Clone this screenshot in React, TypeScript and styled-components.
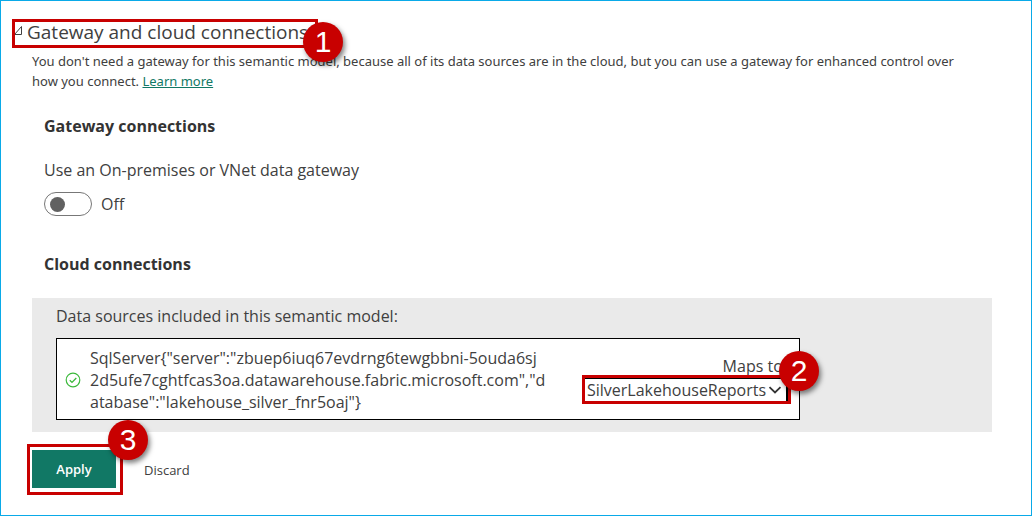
import React from "react";
import styled, { createGlobalStyle } from "styled-components";

const GlobalStyle = createGlobalStyle`
  *, *::before, *::after { box-sizing: border-box; }
  body {
    margin: 0;
    background: #fff;
    color: #404040;
    font-family: "Open Sans", "Noto Sans", sans-serif;
    font-size: 16px;
    line-height: 22px;
  }
`;

const Page = styled.main`
  min-height: 100vh;
  border: 1px solid #0aaae8;
  padding: 18px 39px 20px 31px;
`;

const Highlight = styled.div<{ $pad?: string }>`
  position: relative;
  display: flex;
  align-items: center;
  width: max-content;
  border: 3px solid #c80000;
  padding: ${(p) => p.$pad ?? "0"};
`;

const Badge = styled.span<{ $top: number; $right: number }>`
  position: absolute;
  top: ${(p) => p.$top}px;
  right: ${(p) => p.$right}px;
  z-index: 1;
  display: flex;
  align-items: center;
  justify-content: center;
  width: 40px;
  height: 40px;
  border-radius: 50%;
  background: #c80000;
  box-shadow: 2px 3px 5px rgba(0, 0, 0, 0.5);
  color: #fff;
  font: 30px/40px "Liberation Sans", Arial, sans-serif;
`;

const SectionHeader = styled.header`
  margin-left: -20px;
`;

const HeadingMark = styled(Highlight)`
  align-items: flex-start;
  width: 306px;
  height: 29px;
`;

const Disclosure = styled.button`
  display: flex;
  align-items: center;
  gap: 4px;
  border: 0;
  padding: 0;
  background: none;
  color: inherit;
  font: inherit;
  white-space: nowrap;
`;

const Title = styled.h1`
  margin: 0;
  font-size: 19px;
  line-height: 20px;
  font-weight: 400;
`;

const Description = styled.p`
  margin: 3px 0 0;
  padding-right: 20px;
  font-family: "Noto Sans", "Open Sans", sans-serif;
  font-size: 13px;
  line-height: 20px;
`;

const Link = styled.a`
  color: #117865;
  text-decoration: underline;
`;

const Group = styled.section`
  padding: 24px 12px 0;
`;

const Subheading = styled.h2`
  margin: 0;
  color: #333;
  font-size: 16px;
  line-height: 22px;
  font-weight: 700;
`;

const FieldLabel = styled.div`
  margin-top: 22px;
`;

const SwitchRow = styled.label`
  display: flex;
  align-items: center;
  gap: 9px;
  margin-top: 11px;
`;

const Switch = styled.input`
  appearance: none;
  display: flex;
  align-items: center;
  width: 48px;
  height: 24px;
  margin: 0;
  border: 1px solid #777;
  border-radius: 12px;
  padding: 0 5px;
  background: #fff;
  &::before {
    content: "";
    width: 15px;
    height: 15px;
    border-radius: 50%;
    background: #616161;
  }
  &:checked {
    justify-content: flex-end;
  }
`;

const CloudHeading = styled(Subheading)`
  margin-top: 37px;
`;

const Panel = styled.section`
  margin-top: 23px;
  padding: 7px 24px 12px;
  background: #eaeaea;
`;

const Source = styled.div`
  display: flex;
  align-items: center;
  max-width: 744px;
  margin-top: 11px;
  border: 1px solid #000;
  padding: 8px 8px 6px;
  background: #fff;
`;

const SourceName = styled.div`
  flex: 1;
  margin-left: 9px;
  white-space: nowrap;
`;

const Mapping = styled.div`
  display: flex;
  flex-direction: column;
  align-items: flex-end;
  padding: 4px 0 3px;
`;

const MapLabel = styled.label`
  padding-right: 4px;
  line-height: 18px;
`;

const SelectBox = styled.div`
  display: flex;
  align-items: center;
  width: 203px;
  height: 23px;
  border-top: 1px solid #000;
  border-right: 2px solid #000;
  svg {
    flex: none;
    margin-left: -18px;
    pointer-events: none;
  }
`;

const Select = styled.select`
  appearance: none;
  width: 100%;
  height: 22px;
  border: 0;
  padding: 0 16px 0 2px;
  background: transparent;
  color: inherit;
  font: inherit;
`;

const Actions = styled.footer`
  display: flex;
  align-items: center;
  gap: 21px;
  margin: 12px 0 0 -5px;
`;

const Button = styled.button<{ $primary?: boolean }>`
  min-width: ${(p) => (p.$primary ? "84px" : "0")};
  height: 38px;
  border: 0;
  padding: 0;
  background: ${(p) => (p.$primary ? "#117865" : "none")};
  color: ${(p) => (p.$primary ? "#fff" : "#404040")};
  font: ${(p) => (p.$primary ? 600 : 400)} 13px/20px "Open Sans", "Noto Sans", sans-serif;
`;

export default function App() {
  return (
    <>
      <GlobalStyle />
      <Page>
        <SectionHeader>
          <HeadingMark>
            <Disclosure type="button" aria-expanded="true">
              <svg width="8" height="20" viewBox="0 0 8 20" aria-hidden="true">
                <path d="M-0.5 12.5 L6.5 4.5 V12.5 Z" fill="none" stroke="#404040" />
              </svg>
              <Title>Gateway and cloud connections</Title>
            </Disclosure>
            <Badge $top={0} $right={-28}>1</Badge>
          </HeadingMark>
        </SectionHeader>
        <Description>
          You don't need a gateway for this semantic model, because all of its data sources are in
          the cloud, but you can use a gateway for enhanced control over how you connect.{" "}
          <Link href="#learn-more">Learn more</Link>
        </Description>

        <Group>
          <Subheading>Gateway connections</Subheading>
          <FieldLabel id="gateway-label">Use an On-premises or VNet data gateway</FieldLabel>
          <SwitchRow>
            <Switch type="checkbox" role="switch" aria-labelledby="gateway-label" />
            Off
          </SwitchRow>
          <CloudHeading>Cloud connections</CloudHeading>
        </Group>

        <Panel>
          <div>Data sources included in this semantic model:</div>
          <Source>
            <svg width="16" height="16" viewBox="0 0 16 16" fill="none" stroke="#3cb93c" aria-hidden="true">
              <circle cx="8" cy="8" r="6.8" strokeWidth="1.2" />
              <path d="M4.8 8.2 L7 10.4 L11.3 6" strokeWidth="1.3" />
            </svg>
            <SourceName>
              {'SqlServer{"server":"zbuep6iuq67evdrng6tewgbbni-5ouda6sj'}
              <br />
              {'2d5ufe7cghtfcas3oa.datawarehouse.fabric.microsoft.com","d'}
              <br />
              {'atabase":"lakehouse_silver_fnr5oaj"}'}
            </SourceName>
            <Mapping>
              <MapLabel htmlFor="mapping">Maps to:</MapLabel>
              <Highlight>
                <SelectBox>
                  <Select id="mapping">
                    <option>SilverLakehouseReports</option>
                  </Select>
                  <svg width="14" height="14" viewBox="0 0 14 14" fill="none" stroke="#333" strokeWidth="1.8" aria-hidden="true">
                    <path d="M1.5 4.2 L7 9.5 L12.5 4.2" />
                  </svg>
                </SelectBox>
                <Badge $top={-27} $right={-31}>2</Badge>
              </Highlight>
            </Mapping>
          </Source>
        </Panel>

        <Actions>
          <Highlight $pad="3px 4px 4px 2px">
            <Button type="button" $primary>Apply</Button>
            <Badge $top={-27} $right={-28}>3</Badge>
          </Highlight>
          <Button type="button">Discard</Button>
        </Actions>
      </Page>
    </>
  );
}
